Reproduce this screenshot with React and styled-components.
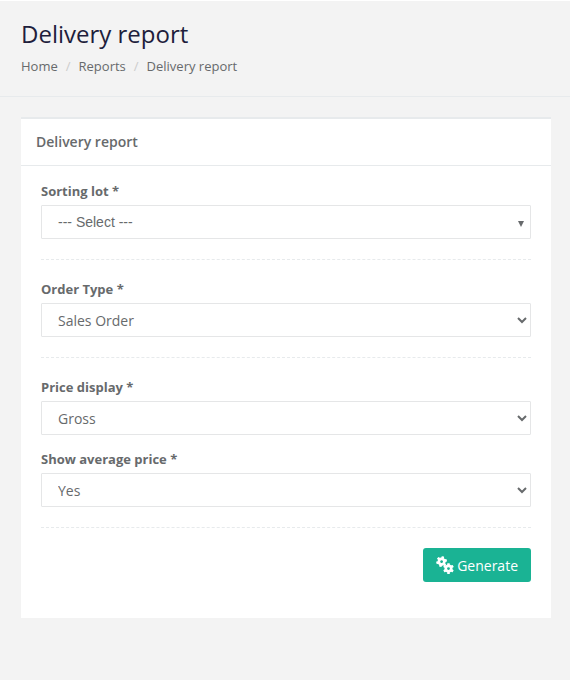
import styled, { createGlobalStyle } from "styled-components";

const GlobalStyle = createGlobalStyle`
  * {
    box-sizing: border-box;
  }

  body {
    margin: 0;
    border-top: 1px solid #ffffff;
    background: #f3f3f3;
    color: #676a6c;
    font-family: "Open Sans", "Liberation Sans", sans-serif;
    font-size: 13px;
    line-height: 18px;
  }
`;

const PageHeading = styled.header`
  padding: 19px 21px 21px;
  border-bottom: 1px solid #e7eaec;
`;

const PageTitle = styled.h1`
  margin: 0 0 9px;
  color: #1e1e3c;
  font-size: 24px;
  font-weight: 400;
  line-height: 28px;
`;

const Breadcrumb = styled.ol`
  display: flex;
  margin: 0;
  padding: 0;
  list-style: none;

  li + li::before {
    content: "/";
    padding: 0 8px;
    color: #cccccc;
  }

  a {
    color: inherit;
    text-decoration: none;
  }
`;

const Content = styled.main`
  padding: 20px 19px 40px 21px;
`;

const Panel = styled.section`
  border-top: 2px solid #e7eaec;
  background: #ffffff;
`;

const PanelTitle = styled.h2`
  margin: 0;
  padding: 14px 15px;
  border-bottom: 1px solid #e7eaec;
  font-size: 14px;
  font-weight: 600;
  line-height: 18px;
`;

const Form = styled.form`
  padding: 16px 20px 36px;
`;

const Field = styled.div`
  & + & {
    margin-top: 15px;
  }
`;

const Label = styled.label`
  display: block;
  margin-bottom: 5px;
  font-weight: 700;
`;

const Select = styled.select`
  display: block;
  width: 100%;
  height: 34px;
  padding: 6px 12px;
  border: 1px solid #e5e6e7;
  border-radius: 1px;
  background: #ffffff;
  color: inherit;
  font-family: inherit;
  font-size: 14px;
`;

const LotSelectWrap = styled.div`
  position: relative;

  svg {
    position: absolute;
    top: 16px;
    right: 7px;
    width: 6px;
    height: 6px;
    fill: currentColor;
    pointer-events: none;
  }
`;

const LotSelect = styled(Select)`
  appearance: none;
  padding: 6px 16px;
  font-family: "Liberation Sans", Arial, sans-serif;
`;

const Divider = styled.hr`
  margin: 20px 0;
  border: 0;
  border-top: 1px dashed #e7eaec;
`;

const Actions = styled.div`
  display: flex;
  justify-content: flex-end;
`;

const Button = styled.button`
  display: flex;
  align-items: center;
  gap: 3px;
  height: 34px;
  padding: 0 13px;
  border: 0;
  border-radius: 3px;
  background: #1ab394;
  color: #ffffff;
  font-family: inherit;
  font-size: 14px;
  cursor: pointer;

  svg {
    width: 18px;
    height: 18px;
  }
`;

function Gear({ x, y, turn }) {
  return (
    <g transform={`translate(${x} ${y}) rotate(${turn})`}>
      <circle r="2.7" fill="none" stroke="currentColor" strokeWidth="2.6" />
      {[0, 60, 120, 180, 240, 300].map((angle) => (
        <rect key={angle} x="-1.3" y="-5.4" width="2.6" height="2.6" rx="0.5" fill="currentColor" transform={`rotate(${angle})`} />
      ))}
    </g>
  );
}

function GearsIcon() {
  return (
    <svg viewBox="0 0 18 18" aria-hidden="true">
      <Gear x={5.6} y={5.6} turn={15} />
      <Gear x={12.5} y={12.6} turn={0} />
    </svg>
  );
}

function SelectField({ id, label, options }) {
  return (
    <Field>
      <Label htmlFor={id}>{label} *</Label>
      <Select id={id} name={id}>
        {options.map((option) => (
          <option key={option}>{option}</option>
        ))}
      </Select>
    </Field>
  );
}

function App() {
  return (
    <>
      <GlobalStyle />
      <PageHeading>
        <PageTitle>Delivery report</PageTitle>
        <nav aria-label="Breadcrumb">
          <Breadcrumb>
            <li><a href="#home">Home</a></li>
            <li><a href="#reports">Reports</a></li>
            <li>Delivery report</li>
          </Breadcrumb>
        </nav>
      </PageHeading>

      <Content>
        <Panel>
          <PanelTitle>Delivery report</PanelTitle>
          <Form onSubmit={(e) => e.preventDefault()}>
            <Field>
              <Label htmlFor="lot">Sorting lot *</Label>
              <LotSelectWrap>
                <LotSelect id="lot" name="lot">
                  <option>--- Select ---</option>
                </LotSelect>
                <svg viewBox="0 0 6 6" aria-hidden="true">
                  <path d="M0 0h6L3 6z" />
                </svg>
              </LotSelectWrap>
            </Field>
            <Divider />
            <SelectField id="orderType" label="Order Type" options={["Sales Order"]} />
            <Divider />
            <SelectField id="priceDisplay" label="Price display" options={["Gross"]} />
            <SelectField id="averagePrice" label="Show average price" options={["Yes", "No"]} />
            <Divider />
            <Actions>
              <Button type="submit">
                <GearsIcon />
                Generate
              </Button>
            </Actions>
          </Form>
        </Panel>
      </Content>
    </>
  );
}

export default App;
